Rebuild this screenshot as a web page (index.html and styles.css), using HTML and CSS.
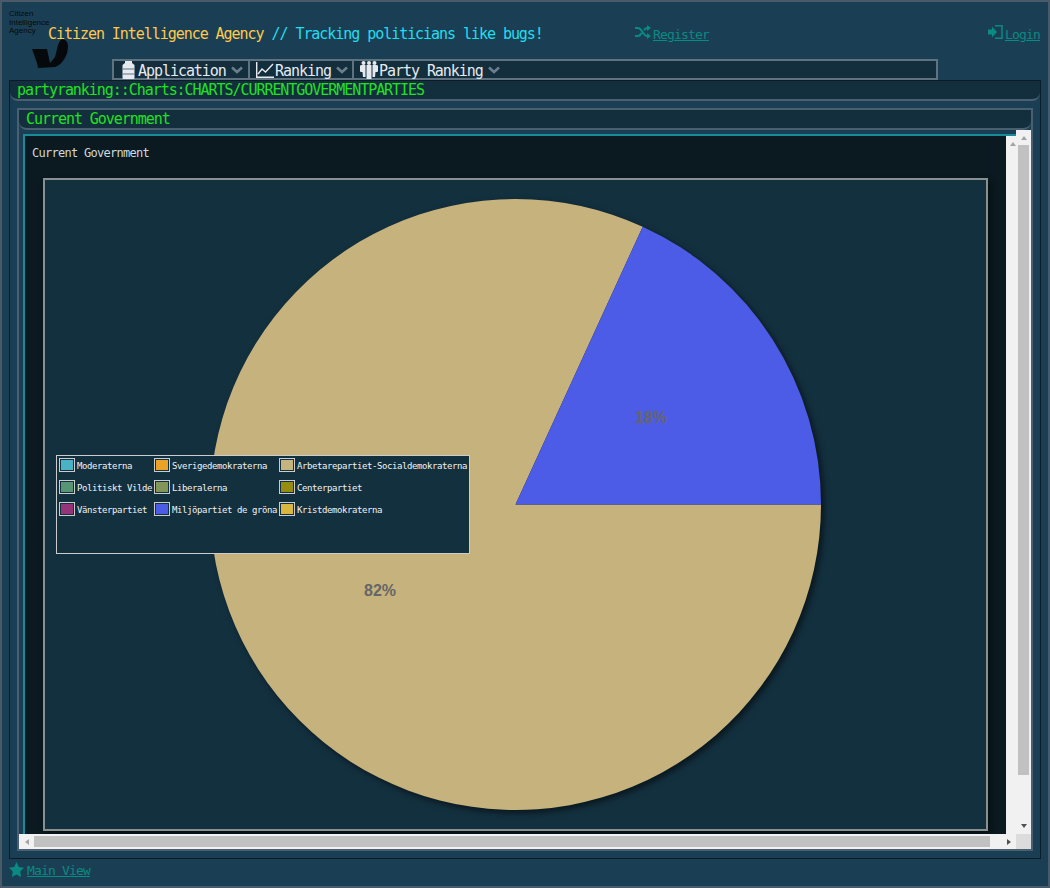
FILE: index.html
```html
<!DOCTYPE html>
<html lang="en">
<head>
    <meta charset="UTF-8">
    <meta name="viewport" content="width=device-width, initial-scale=1.0">
    <title>Citizen Intelligence Agency</title>
    <link rel="stylesheet" href="styles.css">
</head>
<body>
    <div class="header">
        <div class="logo">
            <div class="logo-text">Citizen<br>Intelligence<br>Agency</div>
            <svg class="logo-figure" width="38" height="32" viewBox="0 0 38 32">
                <path fill="#06090c" d="M0 11 L15 11 L18 25 L23 19 L26 7 Q28 1 31 1 Q36 2 36 9 Q36 15 33 20 Q29 27 23 29 L6 30 L5 25 Z"/>
            </svg>
        </div>
        <div class="header-main">
            <div class="top-row">
                <div class="site-title"><span class="site-name">Citizen Intelligence Agency</span> // Tracking politicians like bugs!</div>
                <div class="top-link link-register">
                    <svg class="top-icon" width="16" height="14" viewBox="0 0 16 14"><path fill="none" stroke="#0a8a80" stroke-width="2" d="M0 3 H3 C7 3 8 11 12 11 H14 M0 11 H3 C5 11 6 9 6.500 8 M9 5 C10 4 11 3 12 3 H14"/><path fill="#0a8a80" d="M12 0 L16 3 L12 6 Z M12 8 L16 11 L12 14 Z"/></svg>
                    <a href="#">Register</a>
                </div>
                <div class="top-link link-login">
                    <svg class="top-icon" width="15" height="14" viewBox="0 0 15 14"><path fill="#0a8a80" d="M0 4.500 H4 V1.500 L9 7 L4 12.500 V9.500 H0 Z"/><path fill="none" stroke="#0a8a80" stroke-width="1.500" d="M7 .8 H14 V13.200 H7"/></svg>
                    <a href="#">Login</a>
                </div>
            </div>
            <div class="menu-bar">
                <div class="menu-item item-app">
                    <svg width="13" height="18" viewBox="0 0 13 18"><path fill="#e6eaee" d="M3 0 H10 V2 L12.500 4 V17 Q12.500 18 11.500 18 H1.500 Q.5 18 .5 17 V4 L3 2 Z"/><path stroke="#5f7280" d="M.5 8 H12.500 M.5 13 H12.500"/></svg>
                    <span>Application</span>
                    <svg class="chevron" width="12" height="8" viewBox="0 0 12 8"><path fill="none" stroke="#6d7f8c" stroke-width="2.500" d="M1 1.500 L6 6 L11 1.500"/></svg>
                </div>
                <div class="menu-item item-rank">
                    <svg width="18" height="16" viewBox="0 0 18 16"><path fill="none" stroke="#e6eaee" stroke-width="1.400" d="M.7 0 V15.300 H18 M2 12 L6 7 L9.500 10 L17 2"/></svg>
                    <span>Ranking</span>
                    <svg class="chevron" width="12" height="8" viewBox="0 0 12 8"><path fill="none" stroke="#6d7f8c" stroke-width="2.500" d="M1 1.500 L6 6 L11 1.500"/></svg>
                </div>
                <div class="menu-item item-party">
                    <svg width="18" height="18" viewBox="0 0 18 18"><g fill="#e6eaee"><circle cx="3.500" cy="2" r="2"/><circle cx="9" cy="2" r="2"/><circle cx="14.500" cy="2" r="2"/><path d="M0 5 Q0 4 2 4 H5.500 V16 H3 L2.500 11 H1 Q0 11 0 10 Z M6.500 4 H11.500 V18 H6.500 Z M12.500 4 H16 Q18 4 18 5 V10 Q18 11 17 11 H15.500 L15 16 H12.500 Z"/></g></svg>
                    <span>Party Ranking</span>
                    <svg class="chevron" width="12" height="8" viewBox="0 0 12 8"><path fill="none" stroke="#6d7f8c" stroke-width="2.500" d="M1 1.500 L6 6 L11 1.500"/></svg>
                </div>
            </div>
        </div>
    </div>

    <div class="main-panel">
        <div class="caption main-caption">partyranking::Charts:CHARTS/CURRENTGOVERMENTPARTIES</div>
        <div class="inner-panel">
            <div class="caption inner-caption">Current Government</div>
            <div class="scroll-frame">
                <div class="view-area">
                    <div class="view-box">
                        <div class="view-content">
                            <div class="chart-title">Current Government</div>
                            <div class="chart-box">
                                <svg class="pie" width="941" height="649" viewBox="0 0 941 649">
                                    <g class="pie-slices">
                                        <path fill="#c5b27d" d="M470.500 324.500 L597.700 46.700 A305.500 305.500 0 1 0 776 324.500 Z"/>
                                        <path fill="#4c5ce6" d="M470.500 324.500 L597.700 46.700 A305.500 305.500 0 0 1 776 324.500 Z"/>
                                    </g>
                                    <text class="pie-label" x="606" y="243" text-anchor="middle">18%</text>
                                    <text class="pie-label" x="335" y="416" text-anchor="middle">82%</text>
                                </svg>
                                <div class="legend">
                                    <div class="legend-row"><span class="swatch"><i class="c1"></i></span><span class="name">Moderaterna</span></div>
                                    <div class="legend-row"><span class="swatch"><i class="c2"></i></span><span class="name">Sverigedemokraterna</span></div>
                                    <div class="legend-row"><span class="swatch"><i class="c3"></i></span><span class="name">Arbetarepartiet-Socialdemokraterna</span></div>
                                    <div class="legend-row"><span class="swatch"><i class="c4"></i></span><span class="name">Politiskt Vilde</span></div>
                                    <div class="legend-row"><span class="swatch"><i class="c5"></i></span><span class="name">Liberalerna</span></div>
                                    <div class="legend-row"><span class="swatch"><i class="c6"></i></span><span class="name">Centerpartiet</span></div>
                                    <div class="legend-row"><span class="swatch"><i class="c7"></i></span><span class="name">Vänsterpartiet</span></div>
                                    <div class="legend-row"><span class="swatch"><i class="c8"></i></span><span class="name">Miljöpartiet de gröna</span></div>
                                    <div class="legend-row"><span class="swatch"><i class="c9"></i></span><span class="name">Kristdemokraterna</span></div>
                                </div>
                            </div>
                        </div>
                        <div class="bar-inner"><span class="arrow-up"></span></div>
                    </div>
                </div>
                <div class="bar-v">
                    <span class="arrow-up"></span>
                    <div class="thumb-v"></div>
                    <span class="arrow-down"></span>
                </div>
                <div class="bar-h">
                    <span class="arrow-left"></span>
                    <div class="thumb-h"></div>
                    <span class="arrow-right"></span>
                </div>
                <div class="bar-corner"></div>
            </div>
        </div>
    </div>

    <div class="footer">
        <svg width="15" height="15" viewBox="0 0 24 24"><path fill="#0a8a80" d="M12 0 L15.700 8 L24 9.200 L18 15.300 L19.400 24 L12 19.800 L4.600 24 L6 15.300 L0 9.200 L8.300 8 Z"/></svg>
        <a href="#">Main View</a>
    </div>
</body>
</html>
```

FILE: styles.css
```css
* {
    box-sizing: border-box;
}
body {
    margin: 0;
    width: 1050px;
    height: 888px;
    overflow: hidden;
    background-color: #1a3f55;
    border: 2px solid #4a5a68;
    font-family: "DejaVu Sans Mono", monospace;
    font-size: 15px;
    letter-spacing: -1.05px;
}
a {
    color: #0a8a80;
}

.header {
    display: flex;
    height: 78px;
    padding-left: 7px;
}
.logo {
    width: 40px;
    flex-shrink: 0;
    padding-top: 8px;
}
.logo-text {
    width: 50px;
    height: 28px;
    font-family: "Liberation Sans", sans-serif;
    font-size: 8px;
    line-height: 8.500px;
    letter-spacing: 0;
    color: #06090c;
}
.logo-figure {
    display: block;
    margin-left: 23px;
}
.header-main {
    flex: 1;
}
.top-row {
    display: flex;
    height: 57px;
    padding-top: 23px;
    line-height: 19px;
}
.site-title {
    width: 587px;
    margin-left: -1px;
    color: #22ddee;
}
.site-name {
    color: #ffc94d;
}
.top-link {
    display: flex;
    align-items: flex-start;
    margin-top: -1px;
    font-size: 13px;
    letter-spacing: -0.83px;
}
.top-icon {
    margin-top: 1px;
    margin-right: 2px;
}
.link-register {
    width: 353px;
}
.link-login {
    width: 60px;
}
.top-link a {
    margin-top: 1px;
}

.menu-bar {
    display: flex;
    width: 826px;
    height: 21px;
    margin-left: 63px;
    background-color: #132f3e;
    border: 2px solid #5f7280;
    color: #e6eaee;
    line-height: 18px;
}
.menu-item {
    display: flex;
    align-items: center;
    gap: 3px;
    height: 17px;
    border-right: 2px solid #5f7280;
}
.menu-item svg {
    flex-shrink: 0;
}
.menu-item span {
    padding-top: 3px;
}
.menu-item .chevron {
    margin-left: 2px;
    margin-top: 1px;
}
.item-app {
    width: 136px;
    padding-left: 8px;
}
.item-rank {
    width: 104px;
    padding-left: 6px;
}
.item-party {
    border-right: 0;
    padding-left: 6px;
}
.item-rank span, .item-party span {
    margin-left: -2px;
}

.main-panel {
    width: 1032px;
    height: 779px;
    margin-left: 7px;
    padding: 0 7px;
    border: 1px solid #0b1c27;
    border-left-width: 1px;
}
.caption {
    height: 20px;
    line-height: 19px;
    background-color: #132f3e;
    color: #22e022;
    border-bottom: 2px solid #4a6070;
    border-radius: 0 0 8px 8px;
}
.main-caption {
    margin: 0 -7px;
    padding-left: 7px;
}
.inner-panel {
    margin-top: 7px;
    height: 743px;
    border: 2px solid #4a6070;
}
.inner-caption {
    padding-left: 7px;
}

.scroll-frame {
    display: grid;
    grid-template-columns: 997px 15px;
    grid-template-rows: 704px 15px;
    background-color: #1a3f55;
}
.view-area {
    padding: 4px 0 0 4px;
    overflow: hidden;
}
.view-box {
    display: flex;
    height: 700px;
    border-top: 2px solid #1a8a9a;
    border-left: 2px solid #1a8a9a;
}
.view-content {
    flex: 1;
    min-width: 0;
    overflow: hidden;
    background-color: #0a1a20;
}
.chart-title {
    height: 42px;
    padding: 10px 0 0 7px;
    font-size: 12px;
    line-height: 14px;
    letter-spacing: -0.72px;
    color: #cfd8dc;
}
.chart-box {
    position: relative;
    width: 945px;
    height: 653px;
    margin-left: 18px;
    background-color: #13303f;
    border: 2px solid #8a9090;
    box-shadow: 3px 3px 6px rgba(0, 0, 0, 0.4);
}
.pie {
    display: block;
}
.pie-slices {
    filter: drop-shadow(3px 3px 3px rgba(0, 0, 0, 0.55));
}
.pie-label {
    font-family: "Liberation Sans", sans-serif;
    font-size: 16px;
    font-weight: bold;
    letter-spacing: 0;
    fill: #666;
}
.legend {
    position: absolute;
    left: 11px;
    top: 275px;
    width: 414px;
    height: 99px;
    padding: 2px 0 0 2px;
    display: grid;
    grid-template-columns: 95px 125px 1fr;
    grid-auto-rows: 22px;
    background-color: #13303f;
    border: 1px solid #ccc;
    color: #f2f2f2;
    font-size: 9px;
    letter-spacing: -0.42px;
}
.legend-row {
    display: flex;
    gap: 2px;
    line-height: 16px;
    white-space: nowrap;
}
.swatch {
    width: 16px;
    height: 14px;
    padding: 1px;
    border: 1px solid #ccc;
    flex-shrink: 0;
}
.swatch i {
    display: block;
    height: 100%;
}
.c1 { background-color: #4bb2c5; }
.c2 { background-color: #eaa228; }
.c3 { background-color: #c5b47f; }
.c4 { background-color: #579575; }
.c5 { background-color: #839557; }
.c6 { background-color: #958c12; }
.c7 { background-color: #953579; }
.c8 { background-color: #4b5de4; }
.c9 { background-color: #d8b83f; }

.bar-inner {
    width: 10px;
    flex-shrink: 0;
    background-color: #f1f1f1;
    padding: 6px 0 0 4px;
}
.bar-v {
    display: flex;
    flex-direction: column;
    align-items: center;
    background-color: #f1f1f1;
    padding-top: 6px;
}
.thumb-v {
    width: 11px;
    height: 630px;
    margin-top: 5px;
    background-color: #c1c1c1;
}
.bar-v .arrow-down {
    margin-top: 49px;
}
.bar-h {
    display: flex;
    align-items: center;
    background-color: #f1f1f1;
    padding-left: 6px;
}
.thumb-h {
    width: 956px;
    height: 11px;
    margin-left: 5px;
    background-color: #c1c1c1;
}
.bar-h .arrow-right {
    margin-left: 17px;
}
.bar-corner {
    background-color: #dcdcdc;
}
.arrow-up, .arrow-down, .arrow-left, .arrow-right {
    display: block;
    width: 0;
    height: 0;
    flex-shrink: 0;
}
.arrow-up {
    border-left: 3.500px solid transparent;
    border-right: 3.500px solid transparent;
    border-bottom: 4px solid #a3a3a3;
}
.bar-inner .arrow-up {
    border-left-width: 3px;
    border-right-width: 3px;
}
.arrow-down {
    border-left: 3.500px solid transparent;
    border-right: 3.500px solid transparent;
    border-top: 4px solid #505050;
}
.arrow-left {
    border-top: 3.500px solid transparent;
    border-bottom: 3.500px solid transparent;
    border-right: 4px solid #a3a3a3;
}
.arrow-right {
    border-top: 3.500px solid transparent;
    border-bottom: 3.500px solid transparent;
    border-left: 4px solid #505050;
}

.footer {
    display: flex;
    align-items: flex-start;
    gap: 3px;
    padding: 3px 0 0 7px;
    font-size: 13px;
    letter-spacing: -0.83px;
    line-height: 16px;
}
.footer a {
    margin-top: 1px;
}
```
